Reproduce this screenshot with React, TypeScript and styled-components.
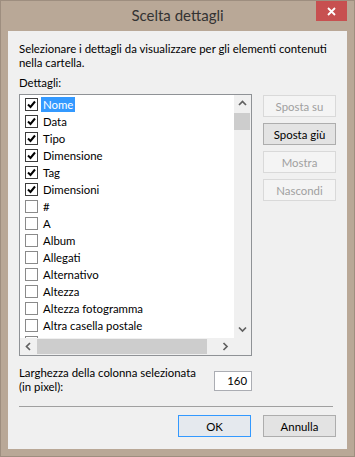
import React from "react";
import styled, { createGlobalStyle } from "styled-components";

const GlobalStyle = createGlobalStyle`
  html, body {
    margin: 0;
    padding: 0;
  }
  body {
    font-family: "Segoe UI", Lato, "Noto Sans", sans-serif;
    font-size: 11.4px;
    color: #000;
  }
`;

const details = [
  { name: "Nome", checked: true, selected: true },
  { name: "Data", checked: true },
  { name: "Tipo", checked: true },
  { name: "Dimensione", checked: true },
  { name: "Tag", checked: true },
  { name: "Dimensioni", checked: true },
  { name: "#" },
  { name: "A" },
  { name: "Album" },
  { name: "Allegati" },
  { name: "Alternativo" },
  { name: "Altezza" },
  { name: "Altezza fotogramma" },
  { name: "Altra casella postale" },
  // the next row is only peeking out above the horizontal scrollbar
  { name: "" },
];

const Chevron = ({ dir }: { dir: "up" | "down" | "left" | "right" }) => {
  const pts = {
    up: "1,5 4.5,1.5 8,5",
    down: "1,1.5 4.5,5 8,1.5",
    left: "5,1 1.5,4.5 5,8",
    right: "1.5,1 5,4.5 1.5,8",
  }[dir];
  const horiz = dir === "left" || dir === "right";
  return (
    <svg width={horiz ? 7 : 9} height={horiz ? 9 : 7} viewBox={horiz ? "0 0 7 9" : "0 0 9 7"}>
      <polyline points={pts} fill="none" stroke="#606060" strokeWidth="1.7" />
    </svg>
  );
};

const App = () => {
  return (
    <>
      <GlobalStyle />
      <Window>
        <TitleBar>
          <Title>Scelta dettagli</Title>
          <CloseButton>
            <svg width="9" height="9" viewBox="0 0 9 9">
              <path d="M1 1 L8 8 M8 1 L1 8" stroke="#fff" strokeWidth="1.8" />
            </svg>
          </CloseButton>
        </TitleBar>
        <Body>
          <Text>
            Selezionare i dettagli da visualizzare per gli elementi contenuti
            <br />
            nella cartella.
          </Text>
          <Text margin="6px 0 0">Dettagli:</Text>
          <MainRow>
            <ListBox>
              <Items>
                {details.map((d, i) => (
                  <Row key={i}>
                    <CheckBox checked={!!d.checked}>
                      {d.checked && (
                        <svg width="11" height="11" viewBox="0 0 11 11">
                          <polyline points="2,5.5 4.5,8 9,2.5" fill="none" stroke="#000" strokeWidth="2" />
                        </svg>
                      )}
                    </CheckBox>
                    {d.name && <ItemLabel selected={!!d.selected}>{d.name}</ItemLabel>}
                  </Row>
                ))}
              </Items>
              <VScroll>
                <ArrowBox><Chevron dir="up" /></ArrowBox>
                <VThumb />
                <Spacer />
                <ArrowBox><Chevron dir="down" /></ArrowBox>
              </VScroll>
              <HScroll>
                <ArrowBox><Chevron dir="left" /></ArrowBox>
                <HThumb />
                <Spacer />
                <ArrowBox><Chevron dir="right" /></ArrowBox>
              </HScroll>
              <Corner />
            </ListBox>
            <SideButtons>
              <Button disabled>Sposta su</Button>
              <Button>Sposta giù</Button>
              <Button disabled>Mostra</Button>
              <Button disabled>Nascondi</Button>
            </SideButtons>
          </MainRow>
          <WidthRow>
            <Text>
              Larghezza della colonna selezionata
              <br />
              (in pixel):
            </Text>
            <NumberBox>160</NumberBox>
          </WidthRow>
          <Separator />
          <Footer>
            <Button isDefault>OK</Button>
            <Button>Annulla</Button>
          </Footer>
        </Body>
      </Window>
    </>
  );
};

export default App;

const Window = styled.div`
  width: 355px;
  height: 457px;
  box-sizing: border-box;
  background: #b9a897;
  border: 1px solid #9e8e7f;
  padding: 0 7px 7px;
  display: flex;
  flex-direction: column;
`;
const TitleBar = styled.div`
  height: 30px;
  display: grid;
  grid-template-columns: 1fr auto 1fr;
  align-items: start;
`;
const Title = styled.div`
  grid-column: 2;
  font-size: 15px;
  line-height: 29px;
  color: #333;
`;
const CloseButton = styled.div`
  grid-column: 3;
  justify-self: end;
  width: 31px;
  height: 20px;
  background: #c75050;
  display: flex;
  align-items: center;
  justify-content: center;
`;
const Body = styled.div`
  flex: 1;
  background: #f0f0f0;
  padding: 11px 11px 0 11px;
  display: flex;
  flex-direction: column;
`;
const Text = styled.p<{ margin?: string }>`
  margin: ${(p) => p.margin ?? "0"};
  line-height: 14px;
  white-space: nowrap;
`;
const MainRow = styled.div`
  display: flex;
  gap: 11px;
  margin-top: 4px;
  align-items: flex-start;
`;
const ListBox = styled.div`
  width: 233px;
  height: 262px;
  box-sizing: border-box;
  border: 1px solid #8f9296;
  background: #fff;
  display: grid;
  grid-template-columns: 1fr 17px;
  grid-template-rows: 1fr 17px;
  overflow: hidden;
`;
const Items = styled.div`
  grid-area: 1 / 1;
  overflow: hidden;
  padding-top: 1px;
`;
const Row = styled.div`
  height: 17px;
  display: flex;
  align-items: center;
  padding-left: 5px;
  gap: 3px;
`;
const CheckBox = styled.div<{ checked: boolean }>`
  width: 13px;
  height: 13px;
  box-sizing: border-box;
  border: 1px solid ${(p) => (p.checked ? "#3c3c3c" : "#8a8a8a")};
  background: #fff;
  display: flex;
  align-items: center;
  justify-content: center;
  flex-shrink: 0;
`;
const ItemLabel = styled.span<{ selected: boolean }>`
  line-height: 15px;
  padding: 0 2px;
  white-space: nowrap;
  background: ${(p) => (p.selected ? "#3399ff" : "transparent")};
  color: ${(p) => (p.selected ? "#fff" : "#000")};
`;
const VScroll = styled.div`
  grid-area: 1 / 2;
  background: #f0f0f0;
  display: flex;
  flex-direction: column;
`;
const HScroll = styled.div`
  grid-area: 2 / 1;
  background: #f0f0f0;
  display: flex;
`;
const Corner = styled.div`
  grid-area: 2 / 2;
  background: #f0f0f0;
`;
const ArrowBox = styled.div`
  width: 17px;
  height: 17px;
  flex-shrink: 0;
  display: flex;
  align-items: center;
  justify-content: center;
`;
const VThumb = styled.div`
  height: 17px;
  margin: 1px 1px 0 0;
  background: #cdcdcd;
`;
const HThumb = styled.div`
  width: 170px;
  margin: 1px 0;
  background: #cdcdcd;
`;
const Spacer = styled.div`
  flex: 1;
`;
const SideButtons = styled.div`
  display: flex;
  flex-direction: column;
  gap: 6px;
  margin-top: 1px;
`;
const Button = styled.button<{ isDefault?: boolean }>`
  width: 73px;
  height: 22px;
  box-sizing: border-box;
  padding: 0;
  font-family: inherit;
  font-size: 11.4px;
  color: #000;
  background: ${(p) => (p.isDefault ? "#e5e9ee" : "#e3e3e3")};
  border: 1px solid ${(p) => (p.isDefault ? "#3399ff" : "#adadad")};
  &:disabled {
    background: #f4f4f4;
    border-color: #d9d9d9;
    color: #a0a0a0;
  }
`;
const WidthRow = styled.div`
  width: 233px;
  display: flex;
  justify-content: space-between;
  align-items: flex-start;
  margin-top: 10px;
`;
const NumberBox = styled.div`
  width: 38px;
  height: 20px;
  box-sizing: border-box;
  margin-top: 5px;
  border: 1px solid #abadb3;
  background: #fff;
  text-align: right;
  padding-right: 4px;
  line-height: 18px;
`;
const Separator = styled.div`
  height: 1px;
  margin: 12px 3px 0 0;
  background: #a0a0a0;
`;
const Footer = styled.div`
  display: flex;
  justify-content: flex-end;
  gap: 12px;
  margin-top: 8px;
`;
